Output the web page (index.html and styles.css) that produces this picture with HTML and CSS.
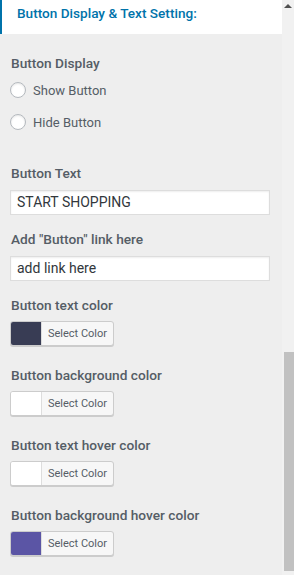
FILE: index.html
```html
<!DOCTYPE html>
<html lang="en">
<head>
    <meta charset="UTF-8">
    <meta name="viewport" content="width=device-width, initial-scale=1.0">
    <title>Button Display &amp; Text Setting</title>
    <link rel="stylesheet" href="styles.css">
</head>
<body>
    <div class="frame">
        <div class="panel">
            <header class="section-title">
                <h3>Button Display &amp; Text Setting:</h3>
            </header>

            <div class="controls">
                <div class="control radio-control">
                    <span class="label">Button Display</span>
                    <label class="radio"><span class="radio-dot"></span>Show Button</label>
                    <label class="radio"><span class="radio-dot"></span>Hide Button</label>
                </div>

                <div class="control">
                    <span class="label">Button Text</span>
                    <div class="text-input">START SHOPPING</div>
                </div>

                <div class="control">
                    <span class="label">Add "Button" link here</span>
                    <div class="text-input">add link here</div>
                </div>

                <div class="control color-control">
                    <span class="label">Button text color</span>
                    <button class="color-button"><span class="swatch" style="background-color: #383c54;"></span><span class="select">Select Color</span></button>
                </div>

                <div class="control color-control">
                    <span class="label">Button background color</span>
                    <button class="color-button"><span class="swatch" style="background-color: #ffffff;"></span><span class="select">Select Color</span></button>
                </div>

                <div class="control color-control">
                    <span class="label">Button text hover color</span>
                    <button class="color-button"><span class="swatch" style="background-color: #ffffff;"></span><span class="select">Select Color</span></button>
                </div>

                <div class="control color-control">
                    <span class="label">Button background hover color</span>
                    <button class="color-button"><span class="swatch" style="background-color: #5b55a5;"></span><span class="select">Select Color</span></button>
                </div>
            </div>
        </div>

        <div class="scrollbar">
            <span class="arrow"></span>
            <div class="thumb"></div>
        </div>
    </div>
</body>
</html>
```

FILE: styles.css
```css
:root {
    --panel-bg: #eeeeee;
    --title-color: #0073aa;
    --label-color: #555d66;
    --text-color: #32373c;
    --border-color: #dddddd;
}

* {
    margin: 0;
    padding: 0;
    box-sizing: border-box;
    font-family: Roboto, "Liberation Sans", sans-serif;
}

body {
    background-color: var(--panel-bg);
    overflow: hidden;
}

.frame {
    display: flex;
    height: 575px;
}

.panel {
    width: 282px;
    background-color: var(--panel-bg);
}

.section-title {
    background-color: white;
    border-left: 2px solid var(--title-color);
    height: 34px;
    padding: 4px 0 0 15px;
}

.section-title h3 {
    font-size: 13.6px;
    font-weight: 500;
    line-height: 18px;
    color: var(--title-color);
}

.controls {
    padding: 20px 12px 0 10px;
}

.control {
    margin-bottom: 15px;
}

.label {
    display: block;
    font-size: 13.7px;
    font-weight: 500;
    color: var(--label-color);
    line-height: 18px;
    margin-left: 1px;
    margin-bottom: 8px;
}

.radio-control {
    margin-bottom: 30px;
}

.radio-control .label {
    margin-bottom: 6px;
}

.radio {
    display: flex;
    align-items: center;
    font-size: 13px;
    color: var(--label-color);
    height: 24px;
    margin-bottom: 8px;
}

.radio:last-child {
    margin-bottom: 0;
}

.radio-dot {
    width: 16px;
    height: 16px;
    border-radius: 50%;
    border: 1px solid #b4b9be;
    background-color: white;
    box-shadow: inset 0 1px 2px rgba(0, 0, 0, 0.1);
    margin-right: 7px;
}

.text-input {
    width: 260px;
    height: 25px;
    background-color: white;
    border: 1px solid var(--border-color);
    box-shadow: inset 0 1px 2px rgba(0, 0, 0, 0.07);
    font-size: 14px;
    color: var(--text-color);
    line-height: 23px;
    padding: 0 6px;
}

.color-control {
    margin-bottom: 20px;
}

.color-control .label {
    margin-bottom: 7px;
}

.color-button {
    display: flex;
    align-items: stretch;
    height: 25px;
    width: 104px;
    border: 1px solid #cccccc;
    border-radius: 3px;
    background-color: #f7f7f7;
    box-shadow: 0 1px 0 #cccccc;
    overflow: hidden;
    cursor: pointer;
}

.swatch {
    width: 31px;
    border-right: 1px solid #dddddd;
}

.select {
    flex: 1;
    font-size: 11px;
    color: var(--label-color);
    line-height: 23px;
    text-align: center;
}

.scrollbar {
    width: 12px;
    background-color: #f1f1f1;
    display: flex;
    flex-direction: column;
    align-items: center;
}

.arrow {
    margin-top: 4px;
    width: 0;
    height: 0;
    border-left: 4px solid transparent;
    border-right: 4px solid transparent;
    border-bottom: 4px solid #505050;
}

.thumb {
    margin-top: 344px;
    width: 10px;
    margin-left: 2px;
    height: 219px;
    background-color: #c1c1c1;
}
```
